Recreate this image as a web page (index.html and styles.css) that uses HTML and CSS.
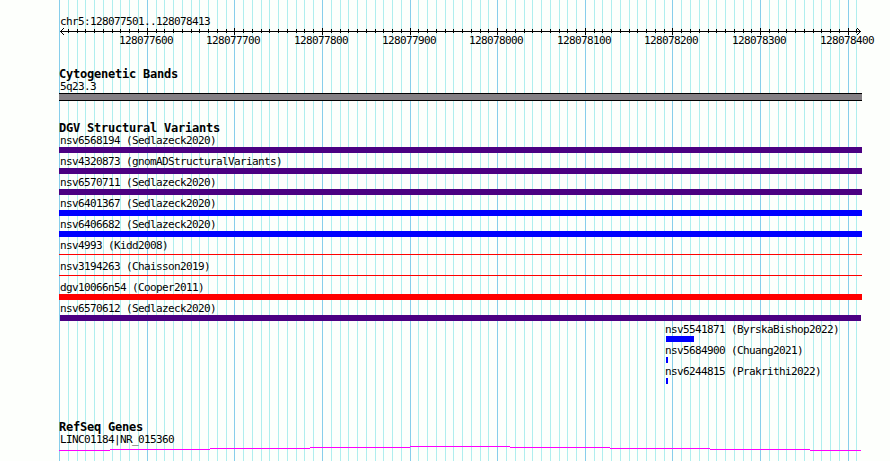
FILE: index.html
```
<!DOCTYPE html>
<html lang="en">
<head>
<meta charset="utf-8">
<title>chr5:128077501..128078413</title>
<link rel="stylesheet" href="styles.css">
</head>
<body>
<main class="browser">
  <svg class="grid" id="grid" width="890" height="461" aria-hidden="true"></svg>
  <header class="ruler">
    <div class="label">chr5:128077501..128078413</div>
    <svg class="axis" id="axis" width="890" height="9" aria-hidden="true">
      <path d="M60 4h801v1h-801z"/>
      <path d="M61 3h1v3h-1zM62 2h1v1h-1zM62 6h1v1h-1zM63 1h1v1h-1zM63 7h1v1h-1zM859 3h1v3h-1zM858 2h1v1h-1zM858 6h1v1h-1zM857 1h1v1h-1zM857 7h1v1h-1z"/>
    </svg>
    <div class="ticks" id="ticks"></div>
  </header>
  <section class="track cyto">
    <h2>Cytogenetic Bands</h2>
    <div class="label">5q23.3</div>
    <div class="band"></div>
  </section>
  <section class="track variants">
    <h2>DGV Structural Variants</h2>
    <div class="row"><div class="label">nsv6568194 (Sedlazeck2020)</div><div class="bar mixed"></div></div>
    <div class="row"><div class="label">nsv4320873 (gnomADStructuralVariants)</div><div class="bar mixed"></div></div>
    <div class="row"><div class="label">nsv6570711 (Sedlazeck2020)</div><div class="bar mixed"></div></div>
    <div class="row"><div class="label">nsv6401367 (Sedlazeck2020)</div><div class="bar gain"></div></div>
    <div class="row"><div class="label">nsv6406682 (Sedlazeck2020)</div><div class="bar gain"></div></div>
    <div class="row"><div class="label">nsv4993 (Kidd2008)</div><div class="bar loss thin"></div></div>
    <div class="row"><div class="label">nsv3194263 (Chaisson2019)</div><div class="bar loss thin"></div></div>
    <div class="row"><div class="label">dgv10066n54 (Cooper2011)</div><div class="bar loss"></div></div>
    <div class="row"><div class="label">nsv6570612 (Sedlazeck2020)</div><div class="bar mixed inset"></div></div>
    <div class="row late"><div class="label">nsv5541871 (ByrskaBishop2022)</div><div class="bar gain medium"></div></div>
    <div class="row late"><div class="label">nsv5684900 (Chuang2021)</div><div class="bar gain tiny"></div></div>
    <div class="row late"><div class="label">nsv6244815 (Prakrithi2022)</div><div class="bar gain tiny"></div></div>
  </section>
  <section class="track genes">
    <h2>RefSeq Genes</h2>
    <div class="label">LINC01184|NR_015360</div>
    <svg class="intron" width="802" height="5" aria-hidden="true">
      <path d="M0 4h51v1h-51zM51 3h100v1h-100zM151 2h100v1h-100zM251 1h100v1h-100zM351 0h100v1h-100zM451 1h100v1h-100zM551 2h100v1h-100zM651 3h100v1h-100zM751 4h51v1h-51z"/>
    </svg>
  </section>
</main>
<script src="script.js"></script>
</body>
</html>
```
FILE: styles.css
```
body {
  margin: 0;
  background: #fdfffc;
  color: #000;
}

.browser {
  position: relative;
  width: 890px;
  height: 461px;
  overflow: hidden;
}

.grid {
  position: absolute;
  inset: 0;
  z-index: -1;
}

.grid,
.axis,
.intron {
  display: block;
  shape-rendering: crispEdges;
}

.minor { fill: #afeeee; }
.major { fill: #87ceeb; }

.label,
.ticks {
  font: 11px/14px "DejaVu Sans Mono", monospace;
  letter-spacing: -0.62px;
  white-space: pre;
}

.label {
  height: 14px;
  padding-left: 1px;
}

h2 {
  margin: 0;
  height: 13px;
  font: bold 12px/15px "DejaVu Sans Mono", monospace;
  letter-spacing: -0.224px;
  white-space: pre;
}

.ruler {
  height: 67px;
  padding-top: 14px;
  box-sizing: border-box;
}

.ruler .label {
  height: 13px;
  padding-left: 60px;
  line-height: 16px;
}

.ticks {
  display: flex;
  height: 14px;
  margin-top: -2px;
}

.ticks span {
  flex: none;
  width: 54px;
}

.track {
  width: 803px;
  margin-left: 59px;
}

.cyto { height: 54px; }

.cyto .label,
.genes .label { height: 13px; }

.band {
  height: 6px;
  background: #848084;
  border: solid #000;
  border-width: 1px 0;
}

.variants { height: 299px; }

.variants h2 { height: 12px; }

.row { height: 21px; }

.row .label { line-height: 16px; }

.late { margin-left: 606px; }

.late .label { padding-left: 0; }

.bar { height: 6px; }

.mixed { background: #4b0082; }
.gain { background: #00f; }
.loss { background: #f00; }

.thin {
  height: 1px;
  transform: translateY(2px);
}

.inset {
  width: 801px;
  margin-left: 1px;
}

.medium { width: 28px; margin-left: 1px; }
.tiny { width: 2px; margin-left: 1px; }

.intron {
  fill: #f0f;
}
```
FILE: script.js
```
const NS = "http://www.w3.org/2000/svg";
const grid = document.getElementById("grid");
const axis = document.getElementById("axis");
const ticks = document.getElementById("ticks");

function addRect(parent, x, y, height, cls) {
  const r = document.createElementNS(NS, "rect");
  r.setAttribute("x", x);
  r.setAttribute("y", y);
  r.setAttribute("width", 1);
  r.setAttribute("height", height);
  if (cls) r.setAttribute("class", cls);
  parent.appendChild(r);
}

let edge = 0;
for (let i = 0; i <= 91; i++) {
  const x = Math.round(59.13 + 8.762 * i);
  const major = i % 10 === 0;
  addRect(grid, x, 0, 461, major ? "major" : "minor");
  if (i === 0) continue;
  addRect(axis, x, major ? 1 : 2, major ? 7 : 4);
  if (major) {
    const s = document.createElement("span");
    s.textContent = 128077500 + i * 10;
    s.style.marginLeft = (x - 28 - edge) + "px";
    ticks.appendChild(s);
    edge = x + 26;
  }
}
```
